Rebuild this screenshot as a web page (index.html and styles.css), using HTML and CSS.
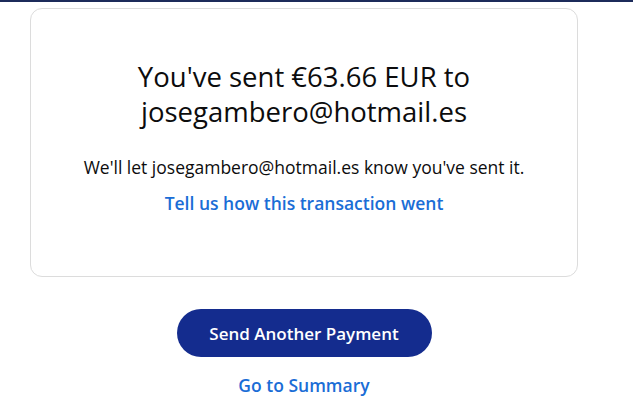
FILE: index.html
```html
<!DOCTYPE html>
<html lang="en">
<head>
<meta charset="utf-8">
<link rel="stylesheet" href="styles.css">
</head>
<body>
<div class="topbar"></div>
<main class="page">
  <section class="card">
    <h1 class="title">You've sent €63.66 EUR to josegambero@hotmail.es</h1>
    <p class="note">We'll let josegambero@hotmail.es know you've sent it.</p>
    <a class="link feedback" href="#">Tell us how this transaction went</a>
  </section>
  <div class="actions">
    <button class="btn-primary" type="button">Send Another Payment</button>
    <a class="link summary" href="#">Go to Summary</a>
  </div>
</main>
</body>
</html>
```

FILE: styles.css
```css
* { box-sizing: border-box; }
html, body { margin: 0; padding: 0; background: #ffffff; }
body {
  font-family: "Open Sans", "Lato", "Noto Sans", sans-serif;
  color: #111;
  width: 633px;
  height: 413px;
  overflow: hidden;
}
.topbar {
  height: 2px;
  background: #1c2b5a;
}
.page {
  padding: 6px 0 0 30px;
  width: 578px;
}
.card {
  border: 1px solid #dcdcdc;
  border-radius: 12px;
  height: 269px;
  display: flex;
  flex-direction: column;
  align-items: center;
  padding-top: 50px;
}
.title {
  margin: 0;
  width: 380px;
  text-align: center;
  font-weight: 400;
  font-size: 27.5px;
  line-height: 35px;
  color: #0c0c0d;
}
.note {
  margin: 26px 0 0;
  font-size: 17.5px;
  line-height: 24px;
  color: #0c0c0d;
}
.link {
  color: #1a6dd6;
  font-weight: 600;
  text-decoration: none;
  font-size: 17.5px;
  line-height: 24px;
}
.feedback { margin-top: 12px; }
.actions {
  display: flex;
  flex-direction: column;
  align-items: center;
  padding-top: 32px;
}
.btn-primary {
  width: 255px;
  height: 48px;
  border: none;
  border-radius: 24px;
  background: #142c8e;
  color: #fff;
  font-family: inherit;
  font-size: 17px;
  font-weight: 600;
  cursor: pointer;
}
.summary { margin-top: 16px; }
```
